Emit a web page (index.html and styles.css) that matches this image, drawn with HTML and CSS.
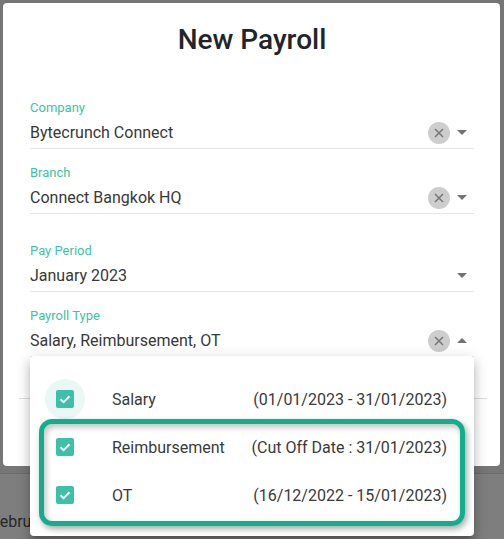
FILE: index.html
```
<!DOCTYPE html>
<html>

<head>
    <meta charset="utf-8">
    <title>New Payroll</title>
    <link rel="stylesheet" href="styles.css">
</head>

<body>
    <div id="page">
        <div id="page-top"></div>
        <div id="page-bottom">
            <span class="month">February</span>
        </div>
    </div>

    <div id="modal">
        <h1 class="title">New Payroll</h1>

        <div class="field">
            <div class="label">Company</div>
            <div class="value-row">
                <span class="value">Bytecrunch Connect</span>
                <svg class="clear" width="22" height="22" viewBox="0 0 22 22">
                    <circle cx="11" cy="11" r="11" fill="#cdcdcd" />
                    <path d="M7 7 L15 15 M15 7 L7 15" stroke="#777" stroke-width="1.5" />
                </svg>
                <span class="caret"><i class="down"></i></span>
            </div>
        </div>

        <div class="field">
            <div class="label">Branch</div>
            <div class="value-row">
                <span class="value">Connect Bangkok HQ</span>
                <svg class="clear" width="22" height="22" viewBox="0 0 22 22">
                    <circle cx="11" cy="11" r="11" fill="#cdcdcd" />
                    <path d="M7 7 L15 15 M15 7 L7 15" stroke="#777" stroke-width="1.5" />
                </svg>
                <span class="caret"><i class="down"></i></span>
            </div>
        </div>

        <div class="field spaced">
            <div class="label">Pay Period</div>
            <div class="value-row">
                <span class="value">January 2023</span>
                <span class="caret"><i class="down"></i></span>
            </div>
        </div>

        <div class="field open">
            <div class="label">Payroll Type</div>
            <div class="value-row">
                <span class="value">Salary, Reimbursement, OT</span>
                <svg class="clear" width="22" height="22" viewBox="0 0 22 22">
                    <circle cx="11" cy="11" r="11" fill="#cdcdcd" />
                    <path d="M7 7 L15 15 M15 7 L7 15" stroke="#777" stroke-width="1.5" />
                </svg>
                <span class="caret"><i class="up"></i></span>
            </div>

            <div class="menu">
                <div class="item">
                    <span class="halo active">
                        <svg width="18" height="18" viewBox="0 0 18 18">
                            <rect width="18" height="18" rx="2" fill="#3dbfa8" />
                            <path d="M4.5 9.2 L7.6 12.2 L13.5 6.2" fill="none" stroke="#fff" stroke-width="2" />
                        </svg>
                    </span>
                    <span class="name">Salary</span>
                    <span class="range">(01/01/2023 - 31/01/2023)</span>
                </div>
                <div class="item">
                    <span class="halo">
                        <svg width="18" height="18" viewBox="0 0 18 18">
                            <rect width="18" height="18" rx="2" fill="#3dbfa8" />
                            <path d="M4.5 9.2 L7.6 12.2 L13.5 6.2" fill="none" stroke="#fff" stroke-width="2" />
                        </svg>
                    </span>
                    <span class="name">Reimbursement</span>
                    <span class="range">(Cut Off Date : 31/01/2023)</span>
                </div>
                <div class="item">
                    <span class="halo">
                        <svg width="18" height="18" viewBox="0 0 18 18">
                            <rect width="18" height="18" rx="2" fill="#3dbfa8" />
                            <path d="M4.5 9.2 L7.6 12.2 L13.5 6.2" fill="none" stroke="#fff" stroke-width="2" />
                        </svg>
                    </span>
                    <span class="name">OT</span>
                    <span class="range">(16/12/2022 - 15/01/2023)</span>
                </div>
                <div class="highlight"></div>
            </div>
        </div>

        <div class="footer-line"></div>
    </div>
</body>

</html>
```

FILE: styles.css
```
* {
    box-sizing: border-box;
}

body {
    margin: 0;
    width: 504px;
    height: 539px;
    overflow: hidden;
    font-family: Roboto, "Liberation Sans", sans-serif;
    background-color: #777777;
}

#page {
    display: flex;
    flex-direction: column;
    height: 539px;
}

#page-top {
    height: 473px;
    background-color: #767676;
}

#page-bottom {
    flex: 1;
    background-color: #7e7e7e;
    border-top: 1px solid #6c6c6c;
    padding-top: 38px;
}

.month {
    display: inline-block;
    margin-left: -9px;
    font-size: 16px;
    color: #262626;
}

#modal {
    position: absolute;
    left: 3px;
    top: 3px;
    width: 497px;
    height: 463px;
    background-color: #fff;
    border-radius: 4px;
    padding: 19px 26px 0 27px;
}

.title {
    margin: 0;
    text-align: center;
    font-size: 28px;
    line-height: 36px;
    font-weight: 500;
    color: #212529;
}

.field {
    margin-top: 16px;
    position: relative;
}

.field:first-of-type {
    margin-top: 42px;
}

.field.spaced {
    margin-top: 29px;
}

.label {
    font-size: 13px;
    line-height: 16px;
    color: #3cc4a4;
}

.value-row {
    display: flex;
    align-items: center;
    height: 33px;
    border-bottom: 1px solid #e4e4ec;
}

.value {
    flex: 1;
    font-size: 16px;
    color: #383838;
}

.clear {
    display: block;
    margin-top: 2px;
}

.caret {
    width: 24px;
    display: flex;
    justify-content: center;
}

.caret i {
    width: 0;
    height: 0;
    border-left: 5px solid transparent;
    border-right: 5px solid transparent;
}

.caret .down {
    border-top: 5px solid #737373;
}

.caret .up {
    border-bottom: 5px solid #737373;
}

.menu {
    position: absolute;
    left: 0;
    top: 48px;
    width: 444px;
    height: 180px;
    background-color: #fff;
    border-radius: 4px;
    padding: 19px 27px 0 15px;
    z-index: 2;
    box-shadow: 0 5px 5px -3px rgba(0, 0, 0, 0.2), 0 8px 10px 1px rgba(0, 0, 0, 0.14), 0 3px 14px 2px rgba(0, 0, 0, 0.12);
}

.item {
    display: flex;
    align-items: center;
    height: 48px;
    font-size: 16px;
    color: #3a3a3a;
}

.halo {
    width: 40px;
    height: 40px;
    border-radius: 50%;
    display: flex;
    align-items: center;
    justify-content: center;
}

.halo.active {
    background-color: #ebf7f5;
}

.halo svg {
    display: block;
}

.name {
    flex: 1;
    margin-left: 27px;
}

.highlight {
    position: absolute;
    left: 9px;
    top: 63px;
    width: 426px;
    height: 107px;
    border: 5px solid #11ae8d;
    border-radius: 13px;
    box-shadow: 2px 3px 6px rgba(0, 0, 0, 0.35), inset 2px 3px 6px rgba(0, 0, 0, 0.25);
}

.footer-line {
    margin: 41px -13px 0 -11px;
    border-top: 1px solid #dedede;
}
```
